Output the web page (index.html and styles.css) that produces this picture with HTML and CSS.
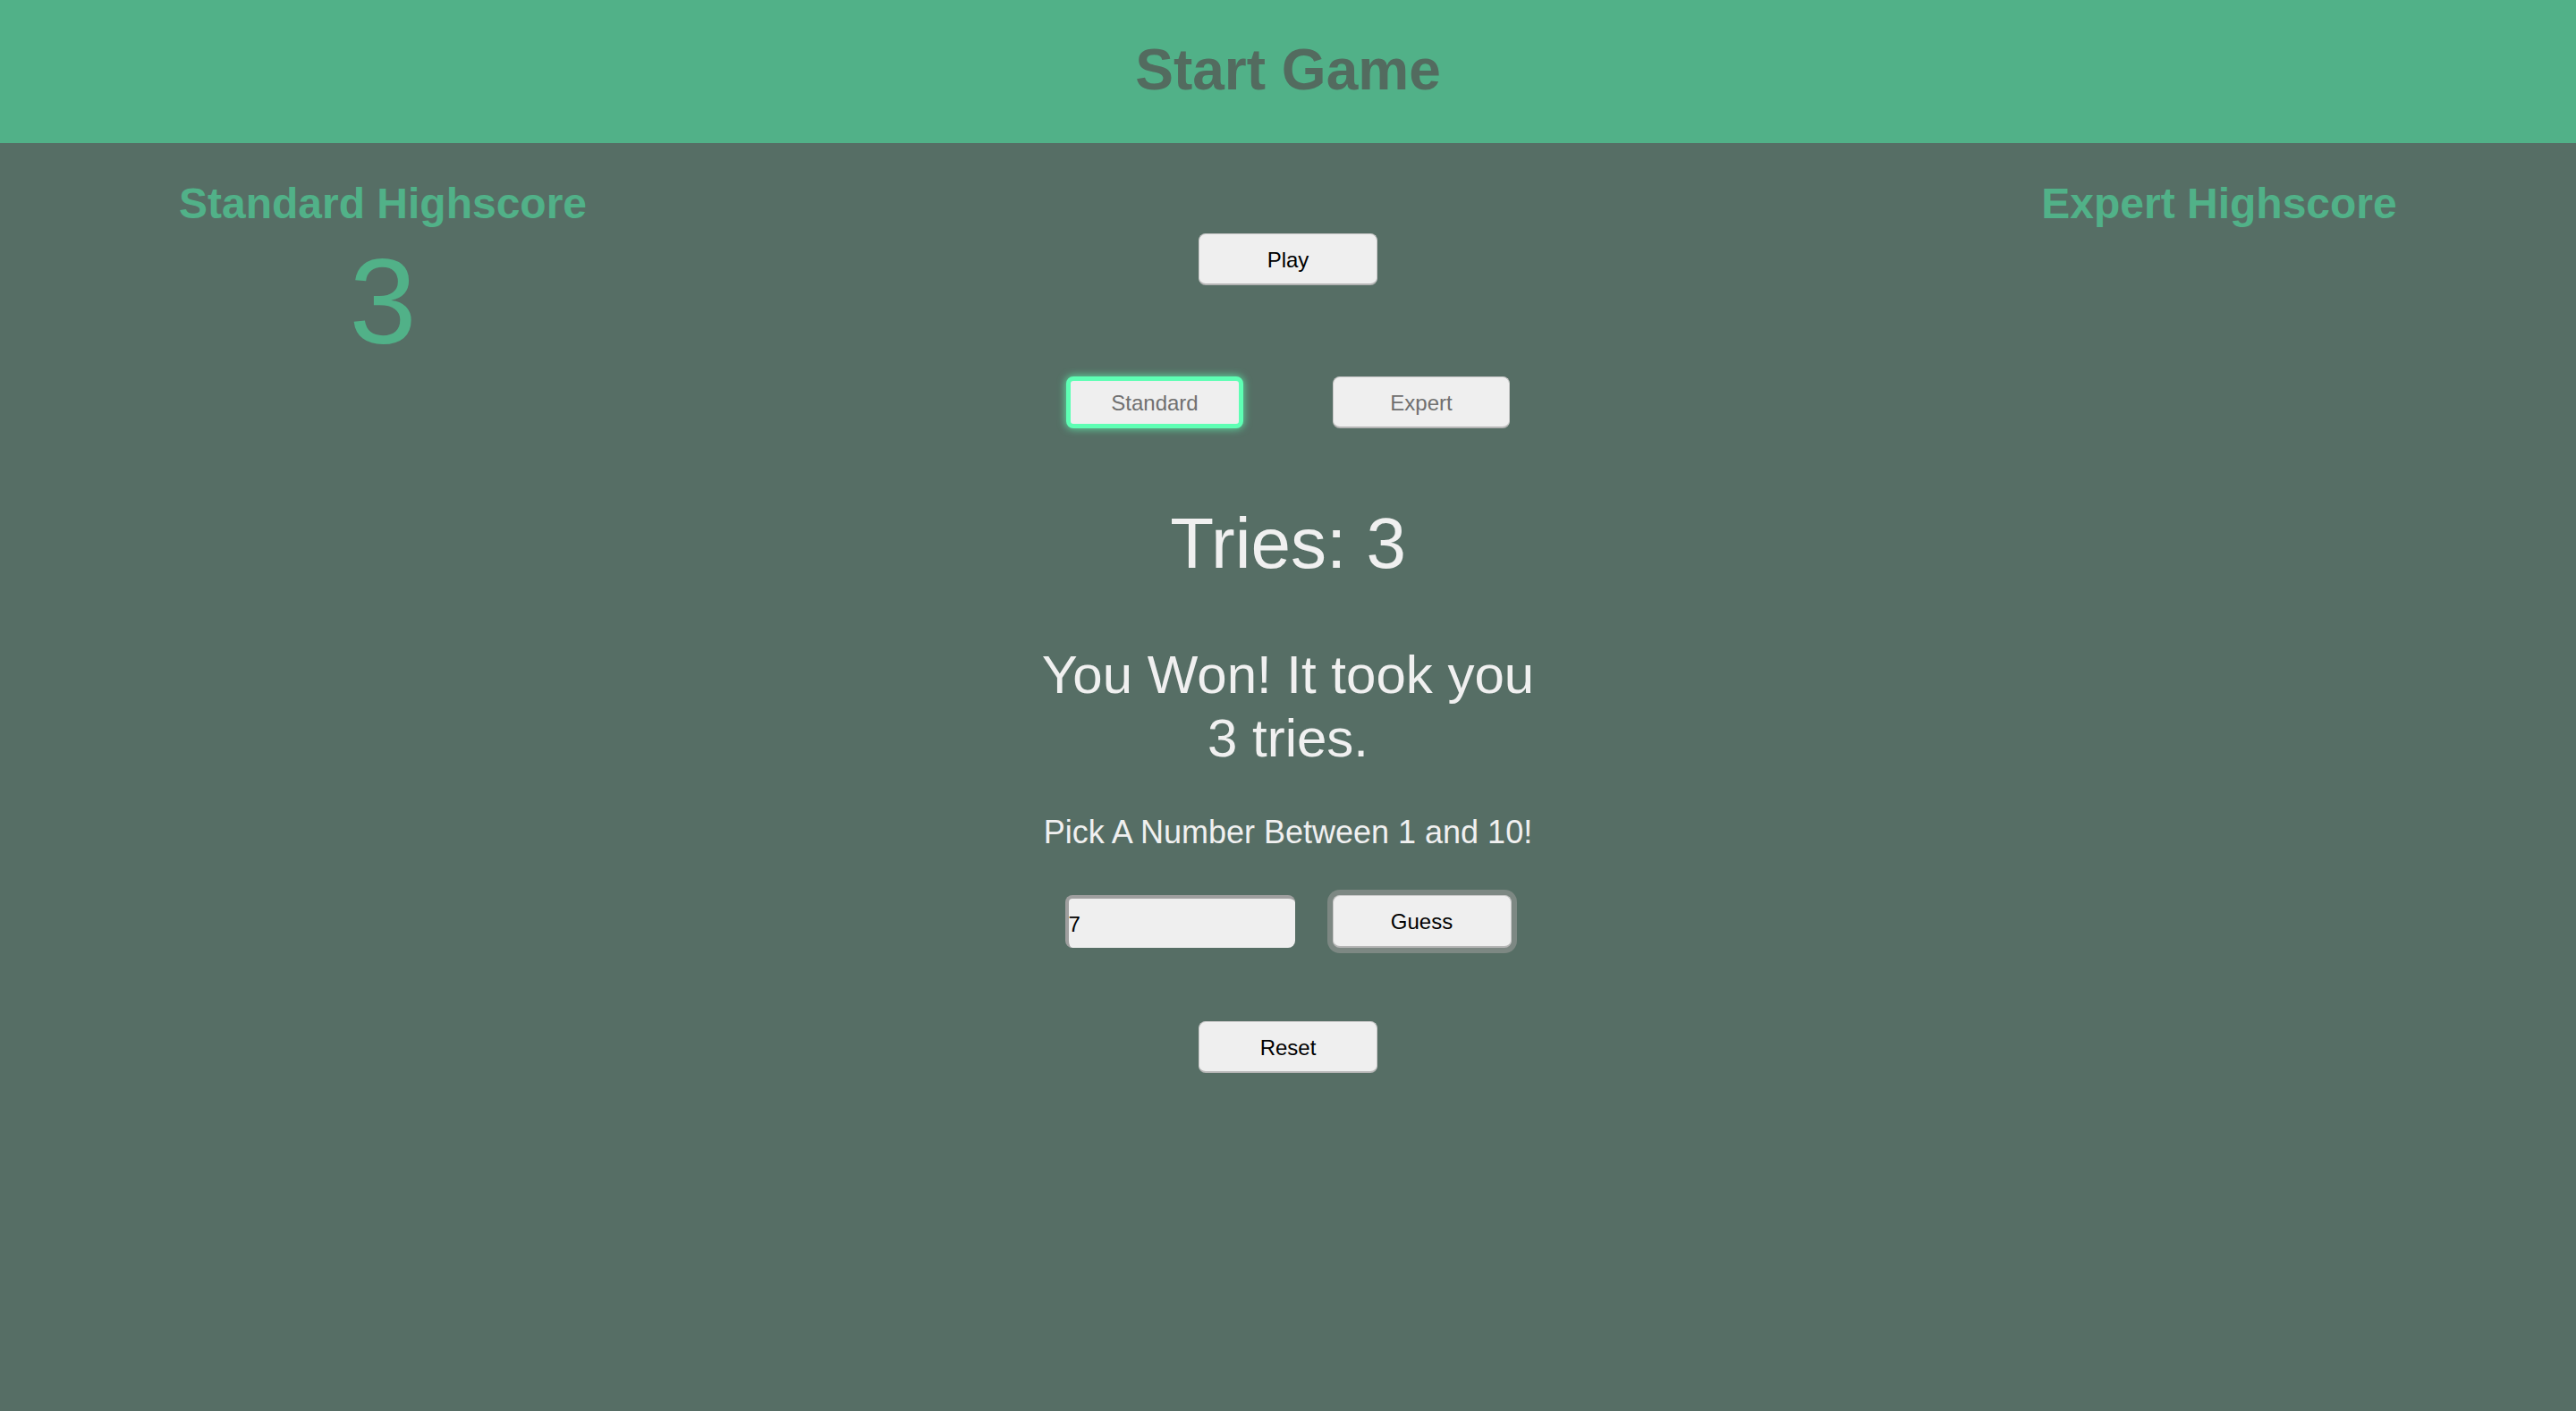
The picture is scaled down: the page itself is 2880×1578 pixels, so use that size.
FILE: index.html
```html
<!DOCTYPE html>
<html lang="en">
<head>
<meta charset="utf-8">
<title>Guessing Game</title>
<link rel="stylesheet" href="styles.css">
</head>
<body>
  <header class="topbar">
    <h1 class="title">Start Game</h1>
  </header>
  <main class="layout">
    <section class="score score-left">
      <h2 class="score-title">Standard Highscore</h2>
      <div class="score-value">3</div>
    </section>
    <section class="game">
      <button class="btn btn-play">Play</button>
      <div class="modes">
        <button class="btn btn-mode btn-active">Standard</button>
        <button class="btn btn-mode">Expert</button>
      </div>
      <div class="tries">Tries: 3</div>
      <div class="message">You Won! It took you 3 tries.</div>
      <div class="prompt">Pick A Number Between 1 and 10!</div>
      <div class="guess-row">
        <input class="guess-input" type="text" value="7">
        <button class="btn btn-guess">Guess</button>
      </div>
      <button class="btn btn-reset">Reset</button>
    </section>
    <section class="score score-right">
      <h2 class="score-title">Expert Highscore</h2>
    </section>
  </main>
</body>
</html>
```

FILE: styles.css
```css
html, body {
  margin: 0;
  padding: 0;
  background: #566e65;
  min-height: 100%;
}

body {
  font-family: "Liberation Sans", Arial, Helvetica, sans-serif;
  min-height: 1578px;
}

.topbar {
  height: 160px;
  background: #51b188;
  display: flex;
  justify-content: center;
}

.title {
  margin: 0;
  font-size: 64px;
  line-height: 156px;
  font-weight: bold;
  color: #536b5f;
}

.layout {
  display: grid;
  grid-template-columns: 820px 1fr 820px;
}

.score {
  display: flex;
  flex-direction: column;
  align-items: center;
  padding-top: 40px;
}

.score-left {
  padding-left: 36px;
}

.score-right {
  padding-left: 22px;
}

.score-title {
  margin: 0;
  font-size: 48px;
  line-height: 56px;
  font-weight: bold;
  color: #51b188;
}

.score-value {
  margin-top: 14px;
  font-size: 135px;
  line-height: 135px;
  color: #51b188;
}

.game {
  display: flex;
  flex-direction: column;
  align-items: center;
  padding-top: 101px;
}

.btn {
  font-family: "Liberation Sans", Arial, Helvetica, sans-serif;
  font-size: 24px;
  color: #000;
  background: #efefef;
  border: 1px solid #c8c8c8;
  border-bottom: 2px solid #b5b5b5;
  border-radius: 8px;
  box-sizing: border-box;
  padding: 2px 0 0;
}

.btn-play,
.btn-reset {
  width: 200px;
  height: 58px;
}

.modes {
  margin-top: 102px;
  display: flex;
  gap: 100px;
}

.btn-mode {
  width: 198px;
  height: 58px;
  color: #707070;
}

.btn-active {
  border: 5px solid #5effb4;
  box-shadow: 0 0 8px 1px rgba(94, 255, 180, 0.7);
}

.tries {
  margin-top: 84px;
  font-size: 80px;
  line-height: 90px;
  color: #f0f0f0;
}

.message {
  margin-top: 66px;
  width: 580px;
  text-align: center;
  font-size: 60px;
  line-height: 71px;
  color: #f0f0f0;
}

.prompt {
  margin-top: 50px;
  font-size: 36px;
  line-height: 40px;
  color: #f0f0f0;
}

.guess-row {
  margin-top: 50px;
  display: flex;
  align-items: center;
  gap: 42px;
}

.guess-input {
  width: 257px;
  height: 59px;
  box-sizing: border-box;
  background: #efefef;
  border: 0;
  border-top: 4px solid #9f9f9f;
  border-left: 4px solid #9f9f9f;
  border-radius: 8px;
  padding: 2px 0 0 0;
  font-family: "Liberation Sans", Arial, Helvetica, sans-serif;
  font-size: 24px;
  color: #000;
}

.btn-guess {
  width: 200px;
  height: 59px;
  box-shadow: 0 0 0 6px #7d8883;
}

.btn-reset {
  margin-top: 82px;
}
```
